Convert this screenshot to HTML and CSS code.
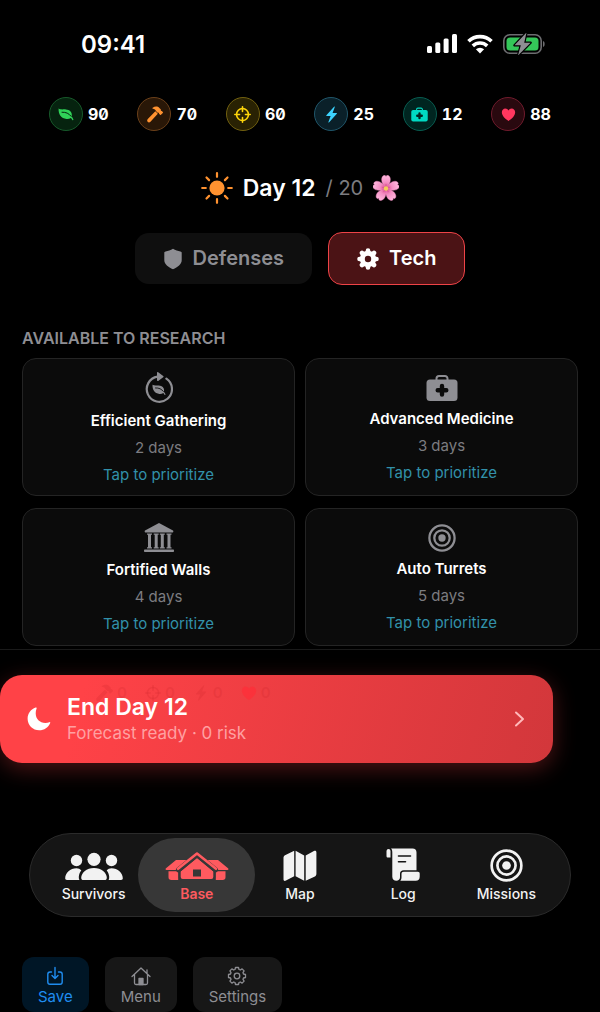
FILE: index.html
```html
<!DOCTYPE html>
<html lang="en">
<head>
  <meta charset="UTF-8" />
  <meta name="viewport" content="width=device-width, initial-scale=1" />
  <title>Base - Tech</title>
  <link rel="stylesheet" href="styles.css">
</head>
<body>
  <!-- Shared icons -->
  <svg class="sprite" aria-hidden="true">
    <symbol id="leaf" viewBox="0 0 16 16">
      <path fill="currentColor" d="M.6 2.600c2 1.300 4.600.6 7.200.8 4 .3 6 2.600 6 5.300 0 .8-.1 1.300-.3 1.800.8.8 1.500 1.700 1.900 3 .2.700-.7 1.100-1.100.4-.4-.8-.9-1.400-1.500-1.900-1.200.9-2.800 1.200-4.300 1C3.200 12.500.2 8.500.6 2.600z"/>
      <path fill="none" stroke="var(--hole)" stroke-width="1" stroke-linecap="round" d="M4 6.200c4-.2 6.800 1.200 9 4"/>
    </symbol>
    <symbol id="hammer" viewBox="0 0 16 16">
      <path fill="currentColor" d="M6.300 1.600C8.400.2 11 .2 12.600 1.800L14 3.300v1.100l.9.200.9 1c.3.300.3.600 0 .9l-1.700 1.700c-.3.300-.6.300-.9 0l-.9-.9-.2-1H11L9.400 4.600C8.800 3.300 8 2.700 6.500 2.500c-.6 0-.7-.5-.2-.9z"/>
      <path fill="currentColor" d="M8.800 5l2.300 2.300-6.900 7.500c-.8.800-1.900.8-2.600.1s-.7-1.800.1-2.600z"/>
    </symbol>
    <symbol id="scope" viewBox="0 0 16 16">
      <g fill="none" stroke="currentColor" stroke-width="1.500" stroke-linecap="round">
        <circle cx="8" cy="8" r="5.600"/>
        <path d="M8 .8v4.400M8 10.800v4.400M.8 8h4.400M10.800 8h4.400"/>
      </g>
    </symbol>
    <symbol id="bolt" viewBox="0 0 16 16">
      <path fill="currentColor" d="M10.400.6 3.200 8.700c-.3.400-.1.700.3.700h3.700L5.100 15c-.2.600.300.8.700.4L13 7.200c.3-.3.1-.7-.3-.7H9L11.100 1c.2-.5-.300-.8-.7-.4z"/>
    </symbol>
    <symbol id="heart" viewBox="0 0 16 16">
      <path fill="currentColor" d="M8 15C4.500 12.700.9 9.500.9 5.700c0-2.400 1.600-4.200 3.700-4.200 1.500 0 2.700.8 3.400 2.100.7-1.300 1.900-2.100 3.400-2.100 2.100 0 3.700 1.800 3.700 4.200 0 3.800-3.600 7-7.100 9.300z"/>
    </symbol>
    <symbol id="medkit" viewBox="0 0 32 28">
      <path fill="none" stroke="currentColor" stroke-width="2" d="M10.500 6V4.500A2.500 2.500 0 0 1 13 2h6a2.500 2.500 0 0 1 2.500 2.500V6"/>
      <rect x="0.500" y="5.500" width="31" height="21.500" rx="3.500" fill="currentColor"/>
      <path fill="none" stroke="var(--hole)" stroke-width="4.400" stroke-linecap="round" stroke-linejoin="round" d="M16 12v8.600M11.700 16.300h8.600"/>
    </symbol>
    <symbol id="target" viewBox="0 0 32 32">
      <g fill="none" stroke="currentColor" stroke-width="2.600">
        <circle cx="16" cy="16" r="14.400"/>
        <circle cx="16" cy="16" r="8.800"/>
      </g>
      <circle cx="16" cy="16" r="4.200" fill="currentColor"/>
    </symbol>
  </svg>

  <header class="status-bar">
    <time>09:41</time>
    <div class="status-icons">
      <svg width="30" height="20" viewBox="0 0 30 20" fill="#fff" aria-hidden="true">
        <rect x="0" y="12" width="5" height="7" rx="1.500"/>
        <rect x="8.300" y="8.500" width="5" height="10.500" rx="1.500"/>
        <rect x="16.600" y="4.500" width="5" height="14.500" rx="1.500"/>
        <rect x="25" y="0" width="5" height="19" rx="1.500"/>
      </svg>
      <svg width="26" height="20" viewBox="0 0 26 20" aria-hidden="true">
        <g fill="none" stroke="#fff" stroke-width="3.600">
          <path d="M1.500 7.300a16.500 16.500 0 0 1 23 0"/>
          <path d="M5.800 11.900a10.500 10.500 0 0 1 14.400 0"/>
        </g>
        <path fill="#fff" d="M13 19.400 8.900 15.300a6 6 0 0 1 8.200 0z"/>
      </svg>
      <svg width="42" height="22" viewBox="0 0 42 22" aria-hidden="true">
        <rect x="0.800" y="1.800" width="37.400" height="18.400" rx="6" fill="none" stroke="#6d6d70" stroke-width="1.600"/>
        <path d="M40 8c2.200.5 2.200 5.500 0 6z" fill="#6d6d70"/>
        <rect x="3.500" y="4.500" width="32" height="13" rx="3.500" fill="#34c759"/>
        <path d="M23.500-.5 11.500 12.300h6.300L15 22.500 27.600 9.700h-6.400z" fill="#8e8e93" stroke="#000" stroke-width="2.400" stroke-linejoin="round" paint-order="stroke"/>
      </svg>
    </div>
  </header>

  <ul class="resources">
    <li class="food"><span class="badge"><svg width="16" height="16"><use href="#leaf"/></svg></span>90</li>
    <li class="materials"><span class="badge"><svg width="17" height="17"><use href="#hammer"/></svg></span>70</li>
    <li class="ammo"><span class="badge"><svg width="17" height="17"><use href="#scope"/></svg></span>60</li>
    <li class="power"><span class="badge"><svg width="17" height="17"><use href="#bolt"/></svg></span>25</li>
    <li class="medicine"><span class="badge"><svg width="17" height="15"><use href="#medkit"/></svg></span>12</li>
    <li class="morale"><span class="badge"><svg width="15" height="15"><use href="#heart"/></svg></span>88</li>
  </ul>

  <div class="day">
    <svg width="32" height="32" viewBox="0 0 32 32" aria-hidden="true">
      <circle cx="16" cy="16" r="7.600" fill="#ff9230"/>
      <path fill="none" stroke="#ff9230" stroke-width="2.200" stroke-linecap="round" d="M16 1.200v3.600M16 27.200v3.600M1.200 16h3.600M27.200 16h3.600M5.500 5.500l2.600 2.600M23.900 23.900l2.600 2.600M5.500 26.500l2.600-2.600M23.900 8.100l2.600-2.600"/>
    </svg>
    <h1>Day 12</h1>
    <span class="day-total">/ 20</span>
    <svg class="flower" width="26" height="26" viewBox="0 0 26 26" aria-hidden="true">
      <defs>
        <radialGradient id="petalFill" gradientUnits="userSpaceOnUse" cx="13" cy="13" r="13">
          <stop offset="0" stop-color="#d9488c"/>
          <stop offset="0.450" stop-color="#f58fc4"/>
          <stop offset="1" stop-color="#ffb9de"/>
        </radialGradient>
        <path id="petal" fill="url(#petalFill)" stroke="#ee86bc" stroke-width="0.400" d="M13 13.500C9.500 10 7.800 5.500 9 2.400 9.700.6 11.500-.2 12.300.5l.7.900.7-.9c.8-.7 2.600.1 3.300 1.900 1.200 3.100-.5 7.600-4 11.100z"/>
      </defs>
      <use href="#petal"/>
      <use href="#petal" transform="rotate(72 13 13.500)"/>
      <use href="#petal" transform="rotate(144 13 13.500)"/>
      <use href="#petal" transform="rotate(216 13 13.500)"/>
      <use href="#petal" transform="rotate(288 13 13.500)"/>
      <path fill="none" stroke="#d3508f" stroke-width="0.600" stroke-linecap="round" d="M13 13.500V9.500M13 13.500l3.800-1.200M13 13.500l2.400 3.300M13 13.500l-2.400 3.300M13 13.500l-3.800-1.200"/>
      <circle cx="13" cy="13.500" r="2.200" fill="#f5cf5b"/>
    </svg>
  </div>

  <div class="tabs">
    <button type="button" class="tab">
      <svg width="20" height="22" viewBox="0 0 20 22" aria-hidden="true"><path fill="currentColor" d="M10 .8c2.400 1.600 5 2.300 7.400 2.600.9.100 1.300.6 1.300 1.400v7.400c0 4.200-4 6.800-8.700 9-4.700-2.200-8.700-4.800-8.700-9V4.800c0-.8.4-1.300 1.300-1.400C5 3.100 7.600 2.400 10 .8z"/></svg>
      Defenses
    </button>
    <button type="button" class="tab active">
      <svg width="22" height="22" viewBox="0 0 22 22" aria-hidden="true">
        <path fill="none" stroke="currentColor" stroke-width="4.600" stroke-linecap="round" d="M11 2.500v17M2.500 11h17M5 5l12 12M17 5 5 17"/>
        <circle cx="11" cy="11" r="8.200" fill="currentColor"/>
        <circle cx="11" cy="11" r="3.200" fill="#4b1315"/>
      </svg>
      Tech
    </button>
  </div>

  <main>
    <h2>AVAILABLE TO RESEARCH</h2>
    <div class="research">
      <button type="button" class="card">
        <svg width="28" height="32" viewBox="0 0 28 32" aria-hidden="true">
          <path fill="none" stroke="currentColor" stroke-width="2.200" stroke-linecap="round" d="M21.400 6.700A12.600 12.600 0 1 1 12.500 4.700"/>
          <path fill="currentColor" d="M12 .8c0-.7.6-1 1.200-.6l5 3.800c.5.400.5.900 0 1.300l-5 3.600c-.6.400-1.200.1-1.200-.6z"/>
          <use href="#leaf" x="7" y="10.500" width="14" height="14"/>
        </svg>
        <strong>Efficient Gathering</strong>
        <span class="days">2 days</span>
        <span class="hint">Tap to prioritize</span>
      </button>
      <button type="button" class="card">
        <svg width="32" height="28" aria-hidden="true"><use href="#medkit"/></svg>
        <strong>Advanced Medicine</strong>
        <span class="days">3 days</span>
        <span class="hint">Tap to prioritize</span>
      </button>
      <button type="button" class="card">
        <svg width="30" height="30" viewBox="0 0 30 30" fill="currentColor" aria-hidden="true">
          <path d="M15 0 29 7.500c.6.500.4 1.900-.4 1.900H1.400C.6 9.400.4 8 1 7.500z"/>
          <path d="M3 10.600h5v1.200H7v12.400h1v1.200H3v-1.200h1V11.800H3zM9.700 10.600h5v1.200h-1v12.400h1v1.200h-5v-1.200h1V11.800h-1zM15.800 10.600h5v1.200h-1v12.400h1v1.200h-5v-1.200h1V11.800h-1zM22.500 10.600h5v1.200h-1v12.400h1v1.200h-5v-1.200h1V11.800h-1z"/>
          <rect x="0" y="26.600" width="30" height="2.400" rx="0.800"/>
        </svg>
        <strong>Fortified Walls</strong>
        <span class="days">4 days</span>
        <span class="hint">Tap to prioritize</span>
      </button>
      <button type="button" class="card">
        <svg width="28" height="28" aria-hidden="true"><use href="#target"/></svg>
        <strong>Auto Turrets</strong>
        <span class="days">5 days</span>
        <span class="hint">Tap to prioritize</span>
      </button>
    </div>
  </main>

  <section class="end-day">
    <button type="button" class="end-button">
      <svg class="moon" width="24" height="24" viewBox="0 0 24 24" aria-hidden="true"><path fill="#fff" d="M8.600.5C4 2 .6 6.500.6 11.700c0 6.400 5.200 11.600 11.600 11.600 5 0 9.300-3 11-7.400.3-.7-.2-1-.8-.7-1.300.5-2.500.700-4 .7-5.700 0-9.700-3.900-9.700-9.600 0-1.800.3-3.400.9-4.900.3-.700-.3-1.100-1-.9z"/></svg>
      <span class="end-text">
        <strong>End Day 12</strong>
        <small>Forecast ready · 0 risk</small>
      </span>
      <svg width="12" height="18" viewBox="0 0 12 18" aria-hidden="true"><path fill="none" stroke="#ffb9ba" stroke-width="2" stroke-linecap="round" stroke-linejoin="round" d="m2 2.500 7 6.500-7 6.500"/></svg>
    </button>
    <!-- Forecast deltas showing faintly through the button -->
    <ul class="forecast">
      <li><svg width="18" height="18"><use href="#hammer"/></svg>0</li>
      <li><svg width="16" height="16"><use href="#scope"/></svg>0</li>
      <li><svg width="16" height="16"><use href="#bolt"/></svg>0</li>
      <li class="hearts"><svg width="16" height="16"><use href="#heart"/></svg>0</li>
    </ul>
  </section>

  <nav class="nav">
    <a href="#survivors">
      <svg width="58" height="30" viewBox="0 0 58 30" fill="currentColor" aria-hidden="true">
        <circle cx="11.500" cy="8.500" r="5.700"/>
        <circle cx="46.500" cy="8.500" r="5.700"/>
        <circle cx="29" cy="7.300" r="6.600"/>
        <path d="M16.300 18.600c-1.400 1.700-2.300 3.700-2.500 6.200-.1 1.200.1 2.400.6 3.200H2c-1.200 0-1.800-.7-1.800-1.700 0-5.200 5-10 11.300-10 2 0 3.500.7 4.800 2.300zM41.700 18.600c1.400 1.700 2.300 3.700 2.500 6.200.1 1.200-.1 2.400-.6 3.200H56c1.200 0 1.800-.7 1.800-1.700 0-5.200-5-10-11.300-10-2 0-3.500.7-4.800 2.300z"/>
        <path d="M29 16c7.400 0 12.800 5 12.800 9.800 0 1.500-.8 2.300-2.200 2.300H18.400c-1.400 0-2.200-.8-2.200-2.300C16.200 21 21.600 16 29 16z"/>
      </svg>
      Survivors
    </a>
    <a href="#base" class="current">
      <svg width="64" height="30" viewBox="0 0 64 30" fill="currentColor" stroke-linejoin="round" aria-hidden="true">
        <path d="M11 8h14L13.500 18H1.500C.3 18 .3 17 1 16.300zM53 8H39l11.500 10h12c1.200 0 1.200-1 .5-1.700z"/>
        <path d="M3.500 19.200h9.700V28H6.300c-1.800 0-2.800-1-2.800-2.700zM60.500 19.200h-9.700V28h6.900c1.800 0 2.800-1 2.800-2.700z"/>
        <path stroke="#373737" stroke-width="2" d="M32 4.500 49.300 19v6c0 2-1 3-3 3H17.700c-2 0-3-1-3-3v-6z"/>
        <path fill="none" stroke="#373737" stroke-width="5" stroke-linecap="round" d="M13.500 17.800 32 2.700l18.500 15.100"/>
        <path fill="none" stroke="currentColor" stroke-width="2.600" stroke-linecap="round" d="M13 16.800 32 1.500l19 15.300"/>
        <rect x="28" y="17.500" width="8" height="7" fill="#373737"/>
      </svg>
      Base
    </a>
    <a href="#map">
      <svg width="34" height="32" viewBox="0 0 34 32" fill="currentColor" aria-hidden="true">
        <path d="M11.200.8v25.400L3 30.600c-1.500.8-2.500.1-2.500-1.400V8c0-1.300.4-2 1.500-2.700zM12.600.8l8.600 4.700v25.300l-8.600-4.600zM22.700 5.500l8.200-4.400c1.500-.8 2.500-.1 2.500 1.400v21.200c0 1.300-.4 2-1.500 2.700l-9.200 4.400z"/>
      </svg>
      Map
    </a>
    <a href="#log">
      <svg width="34" height="34" viewBox="0 0 34 34" fill="currentColor" aria-hidden="true">
        <path d="M.5 3.500C.5 1.800 1.300 1 2.500 1s2 .8 2 2.500v6H2C1 9.500.5 9 .5 8z"/>
        <path d="M5 .5h21.500c2.600 0 4 1.400 4 4v17.700H17.700c-2.400 0-3.700 1.200-3.700 3.600v3.500c0 2.100-1.500 3.500-3.700 3.500s-4-1.400-4-4V4.500C6.300 2.600 6 1.300 5 .5z"/>
        <path d="M17.800 23.700h14c1.200 0 1.900.7 1.900 1.900v3.200c0 2.600-1.400 4-4 4H14.300c.8-.9 1.200-2.100 1.200-3.600v-3.300c0-1.400.8-2.200 2.300-2.200z"/>
        <path fill="none" stroke="#151515" stroke-width="1.600" stroke-linecap="round" d="M12.500 8h12M12.500 13.800h7"/>
      </svg>
      Log
    </a>
    <a href="#missions">
      <svg width="33" height="33" aria-hidden="true"><use href="#target"/></svg>
      Missions
    </a>
  </nav>

  <footer class="actions">
    <button type="button" class="save">
      <svg width="20" height="20" viewBox="0 0 20 20" fill="none" stroke="currentColor" stroke-width="1.400" stroke-linecap="round" stroke-linejoin="round" aria-hidden="true"><path d="M6.500 6H5Q2.800 6 2.800 8.200V16Q2.800 18.200 5 18.200h10q2.200 0 2.200-2.200V8.200Q17.200 6 15 6h-1.500M10 1.500v10.800M7 9.500l3 3 3-3"/></svg>
      Save
    </button>
    <button type="button">
      <svg width="20" height="20" viewBox="0 0 20 20" fill="none" stroke="currentColor" stroke-width="1.300" stroke-linecap="round" stroke-linejoin="round" aria-hidden="true"><path d="M1 10.500 10 2l9 8.500M3.500 8.500V17q0 1.500 1.500 1.500h10q1.500 0 1.500-1.500V8.500M16 3.800v3.500"/><path fill="currentColor" d="M8 12.500h4v6H8z"/></svg>
      Menu
    </button>
    <button type="button">
      <svg width="20" height="20" viewBox="0 0 20 20" fill="none" stroke="currentColor" stroke-width="1.300" stroke-linejoin="round" aria-hidden="true"><path d="M8.500 1.500h3l.5 2 1.300.5 1.800-1.100 2 2L16 6.700l.5 1.300 2 .5v3l-2 .5-.5 1.300 1.100 1.800-2 2-1.800-1.100-1.300.5-.5 2h-3l-.5-2-1.300-.5-1.800 1.100-2-2L4 13.300 3.500 12l-2-.5v-3l2-.5L4 6.700 2.900 4.900l2-2L6.700 4 8 3.500z"/><circle cx="10" cy="10" r="2.800"/></svg>
      Settings
    </button>
  </footer>
</body>
</html>
```

FILE: styles.css
```css
* {
  box-sizing: border-box;
}
body {
  font-family: Inter, "Liberation Sans", sans-serif;
  background-color: #000;
  color: #fff;
  margin: 0;
  overflow: hidden;
  --hole: #0b0b0b;
}
button {
  font: inherit;
  color: inherit;
  border: none;
  cursor: pointer;
}
svg {
  flex-shrink: 0;
}
ul {
  list-style: none;
  margin: 0;
  padding: 0;
}
.sprite {
  position: absolute;
  width: 0;
  height: 0;
}

/* Status bar */
.status-bar {
  display: flex;
  justify-content: space-between;
  align-items: center;
  height: 88px;
  padding: 0 55px 0 81px;
}
.status-bar time {
  font-size: 24px;
  font-weight: 600;
}
.status-icons {
  display: flex;
  align-items: center;
  gap: 10px;
}

/* Resources */
.resources {
  display: flex;
  justify-content: space-between;
  padding: 9px 49px 0;
}
.resources li {
  display: flex;
  align-items: center;
  gap: 5px;
  font-size: 16px;
  font-weight: 700;
  font-feature-settings: "zero", "tnum";
}
.badge {
  display: flex;
  align-items: center;
  justify-content: center;
  width: 34px;
  height: 34px;
  border: 1px solid;
  border-radius: 50%;
}
.food .badge {
  color: #30d158;
  background-color: #06230f;
  border-color: #17592a;
  --hole: #06230f;
}
.materials .badge {
  color: #ff9230;
  background-color: #291707;
  border-color: #6b401a;
}
.ammo .badge {
  color: #ffd60a;
  background-color: #292203;
  border-color: #716010;
}
.power .badge {
  color: #3cd3fe;
  background-color: #0a2029;
  border-color: #20566a;
}
.medicine .badge {
  color: #00dac3;
  background-color: #002520;
  border-color: #085c50;
  --hole: #002520;
}
.morale .badge {
  color: #ff375f;
  background-color: #29090f;
  border-color: #6f1b2c;
}

/* Day counter */
.day {
  display: flex;
  align-items: center;
  justify-content: center;
  gap: 10px;
  height: 32px;
  margin-top: 41px;
}
.day h1 {
  margin: 0;
  font-size: 23px;
  font-weight: 600;
}
.day-total {
  color: #7c7c80;
  font-size: 20px;
}

/* Tabs */
.tabs {
  display: flex;
  justify-content: center;
  align-items: center;
  gap: 16px;
  margin-top: 28px;
}
.tab {
  display: flex;
  align-items: center;
  gap: 10px;
  padding: 13px 28px;
  border-radius: 14px;
  background-color: #0f0f0f;
  color: #8e8e93;
  font-size: 20px;
  font-weight: 600;
  line-height: 25px;
}
.tab.active {
  background-color: #4b1315;
  border: 1px solid #ee4347;
  color: #fff;
}

/* Research */
main {
  padding: 41px 22px 3px;
  border-bottom: 1px solid #1a1a1a;
}
h2 {
  margin: 0 0 8px;
  color: #8e8e93;
  font-size: 16px;
  font-weight: 600;
  line-height: 24px;
}
.research {
  display: grid;
  grid-template-columns: 1fr 1fr;
  gap: 12px 10px;
}
.card {
  display: flex;
  flex-direction: column;
  align-items: center;
  justify-content: center;
  gap: 7px;
  min-height: 138px;
  padding: 12px 12px 10px;
  border: 1px solid #242424;
  border-radius: 14px;
  background-color: #0b0b0b;
  color: #8e8e93;
  font-size: 15px;
  line-height: 20px;
}
.card strong {
  color: #fff;
  font-weight: 600;
}
.days {
  color: #7c7c80;
}
.hint {
  color: #3291aa;
}

/* End day */
.end-day {
  position: relative;
  padding: 25px 47px 0 0;
}
.end-button {
  display: flex;
  align-items: center;
  width: 100%;
  height: 88px;
  padding: 0 27px;
  border-radius: 22px;
  background: linear-gradient(105deg, #ff4247 15%, #d2373b);
  box-shadow: 0 6px 22px rgba(255, 66, 71, 0.3);
  text-align: left;
}
.end-text {
  flex: 1;
  display: flex;
  flex-direction: column;
  padding-left: 16px;
}
.end-text strong {
  font-size: 23px;
  font-weight: 600;
  line-height: 27px;
}
.end-text small {
  color: #ffa0a2;
  font-size: 17px;
  line-height: 24px;
}
.forecast {
  position: absolute;
  top: 34px;
  left: 95px;
  display: flex;
  gap: 18px;
  color: rgba(200, 35, 40, 0.2);
  font-size: 15px;
  font-weight: 600;
  line-height: 16px;
  pointer-events: none;
}
.forecast li {
  display: flex;
  align-items: center;
  gap: 4px;
}
.hearts svg {
  color: rgba(255, 45, 55, 0.7);
}

/* Tab bar */
.nav {
  display: grid;
  grid-template-columns: repeat(5, 1fr);
  margin: 70px 29px 0;
  padding: 4px 12px;
  border: 1px solid #2b2b2b;
  border-radius: 42px;
  background-color: #151515;
}
.nav a {
  display: flex;
  flex-direction: column;
  align-items: center;
  justify-content: flex-end;
  gap: 3px;
  height: 74px;
  padding-bottom: 9px;
  border-radius: 37px;
  color: #f2f2f2;
  font-size: 14px;
  font-weight: 500;
  line-height: 18px;
  text-decoration: none;
}
.nav .current {
  margin: 0 -7px;
  background-color: #373737;
  color: #ff5a5f;
  font-weight: 600;
}

/* Bottom actions */
.actions {
  display: flex;
  gap: 16px;
  margin-top: 40px;
  padding: 0 22px;
}
.actions button {
  display: flex;
  flex-direction: column;
  align-items: center;
  gap: 1px;
  padding: 9px 16px 5px;
  border-radius: 12px;
  background-color: #171717;
  color: #8e8e93;
  font-size: 15px;
  line-height: 20px;
}
.actions .save {
  background-color: #001626;
  color: #1f8df0;
}
```
